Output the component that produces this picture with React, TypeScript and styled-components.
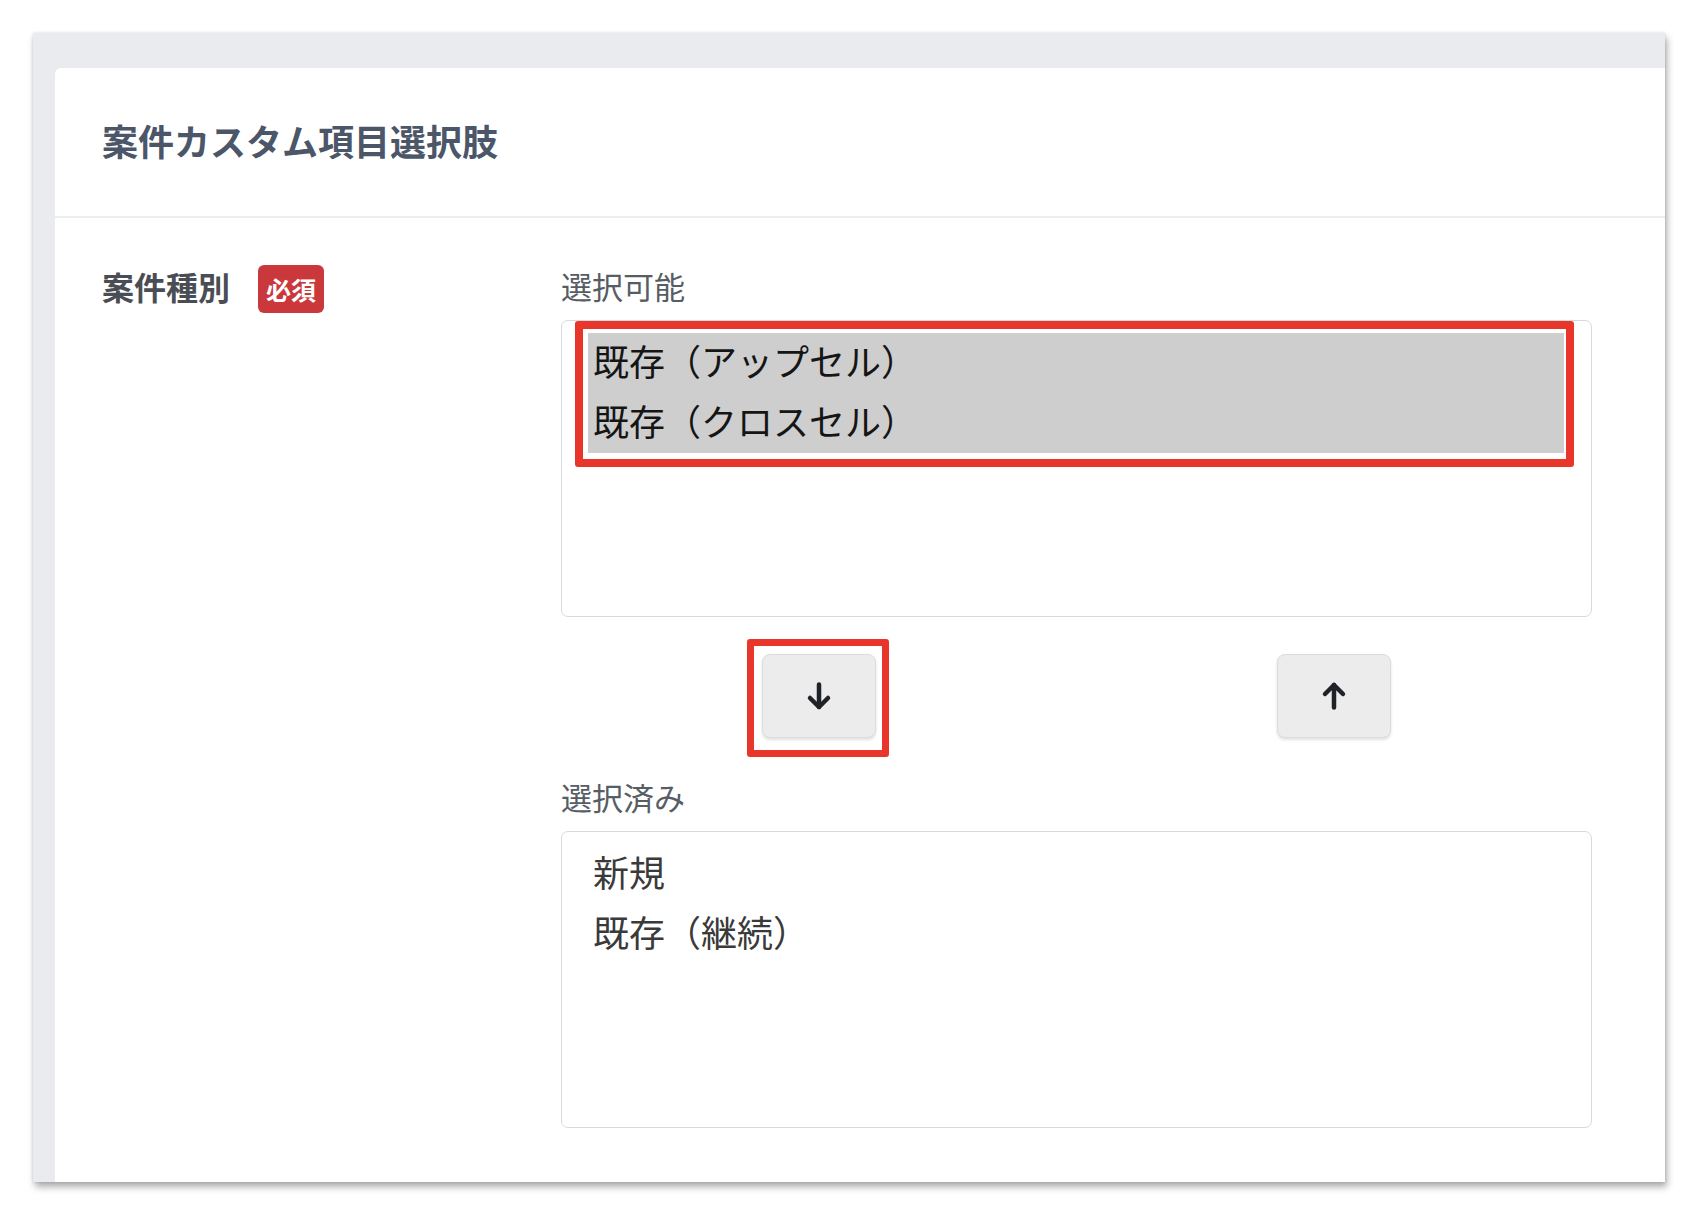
import React, { useState } from 'react';
import styled, { createGlobalStyle } from 'styled-components';

const GlobalStyle = createGlobalStyle`
  html, body {
    margin: 0;
    padding: 0;
    background: #ffffff;
  }
  body {
    font-family: "Noto Sans CJK JP", "Noto Sans", sans-serif;
  }
`;

type Option = {
  id: string;
  label: string;
};

const initialAvailable: Option[] = [
  { id: 'upsell', label: '既存（アップセル）' },
  { id: 'crosssell', label: '既存（クロスセル）' },
];

const initialSelected: Option[] = [
  { id: 'new', label: '新規' },
  { id: 'continue', label: '既存（継続）' },
];

function ArrowIcon({ up }: { up?: boolean }) {
  return (
    <ArrowSvg $up={up} width="30" height="30" viewBox="0 0 30 30" fill="none">
      <path d="M15 3.5V26" stroke="#1f2327" strokeWidth="4.5" strokeLinecap="round" />
      <path d="M6 17L15 26L24 17" stroke="#1f2327" strokeWidth="4.5"
            strokeLinecap="round" strokeLinejoin="round" />
    </ArrowSvg>
  );
}

type ListBoxProps = {
  options: Option[];
  checked: string[];
  marked?: boolean;
  onToggle: (id: string) => void;
};

function ListBox({ options, checked, marked, onToggle }: ListBoxProps) {
  return (
    <ListFrame role="listbox" aria-multiselectable="true">
      {options.map((o) => (
        <ListOption key={o.id}
                    role="option"
                    aria-selected={checked.includes(o.id)}
                    $checked={checked.includes(o.id)}
                    onClick={() => onToggle(o.id)}>
          {o.label}
        </ListOption>
      ))}
      {marked && <ListMark />}
    </ListFrame>
  );
}

export default function App() {
  const [available, setAvailable] = useState<Option[]>(initialAvailable);
  const [selected, setSelected] = useState<Option[]>(initialSelected);
  const [checkedAvailable, setCheckedAvailable] = useState<string[]>(['upsell', 'crosssell']);
  const [checkedSelected, setCheckedSelected] = useState<string[]>([]);

  const toggle = (list: string[], set: (v: string[]) => void) => (id: string) => {
    set(list.includes(id) ? list.filter((x) => x !== id) : [...list, id]);
  };

  const moveDown = () => {
    const moving = available.filter((o) => checkedAvailable.includes(o.id));
    setAvailable(available.filter((o) => !checkedAvailable.includes(o.id)));
    setSelected([...selected, ...moving]);
    setCheckedAvailable([]);
  };

  const moveUp = () => {
    const moving = selected.filter((o) => checkedSelected.includes(o.id));
    setSelected(selected.filter((o) => !checkedSelected.includes(o.id)));
    setAvailable([...available, ...moving]);
    setCheckedSelected([]);
  };

  return (
    <>
      <GlobalStyle />
      <Page>
        <Frame>
          <Card>
            <CardHeader>
              <Title>案件カスタム項目選択肢</Title>
            </CardHeader>
            <CardBody>
              <LabelCell>
                <FieldLabel>案件種別</FieldLabel>
                <RequiredBadge>必須</RequiredBadge>
              </LabelCell>
              <Field>
                <SubLabel>選択可能</SubLabel>
                <ListBox options={available}
                         checked={checkedAvailable}
                         marked
                         onToggle={toggle(checkedAvailable, setCheckedAvailable)} />
                <ButtonRow>
                  <ButtonWrap>
                    <MoveButton type="button" onClick={moveDown} aria-label="選択済みへ移動">
                      <ArrowIcon />
                    </MoveButton>
                    <ButtonMark />
                  </ButtonWrap>
                  <ButtonWrap>
                    <MoveButton type="button" onClick={moveUp} aria-label="選択可能へ移動">
                      <ArrowIcon up />
                    </MoveButton>
                  </ButtonWrap>
                </ButtonRow>
                <SubLabel>選択済み</SubLabel>
                <ListBox options={selected}
                         checked={checkedSelected}
                         onToggle={toggle(checkedSelected, setCheckedSelected)} />
              </Field>
            </CardBody>
          </Card>
        </Frame>
      </Page>
    </>
  );
}

const Page = styled.div`
  padding: 33px 29px 40px 33px;
`;

const Frame = styled.div`
  background: #eaebef;
  padding: 35px 0 0 22px;
  box-shadow: 2px 5px 7px rgba(0, 0, 0, 0.32), 0 0 3px rgba(0, 0, 0, 0.12);
`;

const Card = styled.div`
  background: #ffffff;
  border-top-left-radius: 6px;
`;

const CardHeader = styled.div`
  display: flex;
  align-items: center;
  height: 148px;
  padding-left: 47px;
  border-bottom: 2px solid #eceef3;
`;

const Title = styled.h1`
  margin: 0 0 3px;
  font-size: 36px;
  font-weight: 700;
  color: #4c5669;
  line-height: 1.2;
`;

const CardBody = styled.div`
  display: grid;
  grid-template-columns: 459px 1031px;
  padding: 47px 73px 54px 47px;
`;

const LabelCell = styled.div`
  display: flex;
  align-items: center;
  gap: 28px;
  height: 42px;
`;

const FieldLabel = styled.span`
  font-size: 32px;
  font-weight: 700;
  color: #4a4e54;
  line-height: 42px;
`;

const RequiredBadge = styled.span`
  display: flex;
  align-items: center;
  justify-content: center;
  width: 66px;
  height: 48px;
  margin-top: 6px;
  border-radius: 6px;
  background: #cb383c;
  color: #ffffff;
  font-size: 25px;
  font-weight: 700;
`;

const Field = styled.div`
  display: flex;
  flex-direction: column;
`;

const SubLabel = styled.div`
  font-size: 31px;
  line-height: 42px;
  color: #575d65;
  margin-bottom: 13px;
`;

const ListFrame = styled.div`
  position: relative;
  box-sizing: border-box;
  height: 297px;
  padding: 12px 27px 12px 26px;
  border: 1px solid #d6dadf;
  border-radius: 7px;
  background: #ffffff;
`;

const ListOption = styled.div<{ $checked: boolean }>`
  height: 60px;
  line-height: 55px;
  padding-left: 5px;
  font-size: 36px;
  color: ${(p) => (p.$checked ? '#151515' : '#3a3a3a')};
  background: ${(p) => (p.$checked ? '#cecece' : 'transparent')};
  cursor: default;
  white-space: nowrap;
`;

const ListMark = styled.div`
  position: absolute;
  left: 13px;
  top: 0;
  width: 999px;
  height: 146px;
  box-sizing: border-box;
  border: 8px solid #e8372a;
  border-radius: 3px;
  pointer-events: none;
`;

const ButtonRow = styled.div`
  display: grid;
  grid-template-columns: 1fr 1fr;
  justify-items: center;
  margin: 37px 0 38px;
`;

const ButtonWrap = styled.div`
  position: relative;
`;

const MoveButton = styled.button`
  display: flex;
  align-items: center;
  justify-content: center;
  width: 114px;
  height: 84px;
  padding: 0;
  background: #ececec;
  border: 1px solid #dcdcdc;
  border-radius: 8px;
  box-shadow: 0 2px 3px rgba(0, 0, 0, 0.12);
  cursor: pointer;
`;

const ArrowSvg = styled.svg<{ $up?: boolean }>`
  display: block;
  transform: ${(p) => (p.$up ? 'rotate(180deg)' : 'none')};
`;

const ButtonMark = styled.div`
  position: absolute;
  left: -15px;
  top: -15px;
  right: -13px;
  bottom: -19px;
  border: 7px solid #e8372a;
  border-radius: 3px;
  pointer-events: none;
`;
